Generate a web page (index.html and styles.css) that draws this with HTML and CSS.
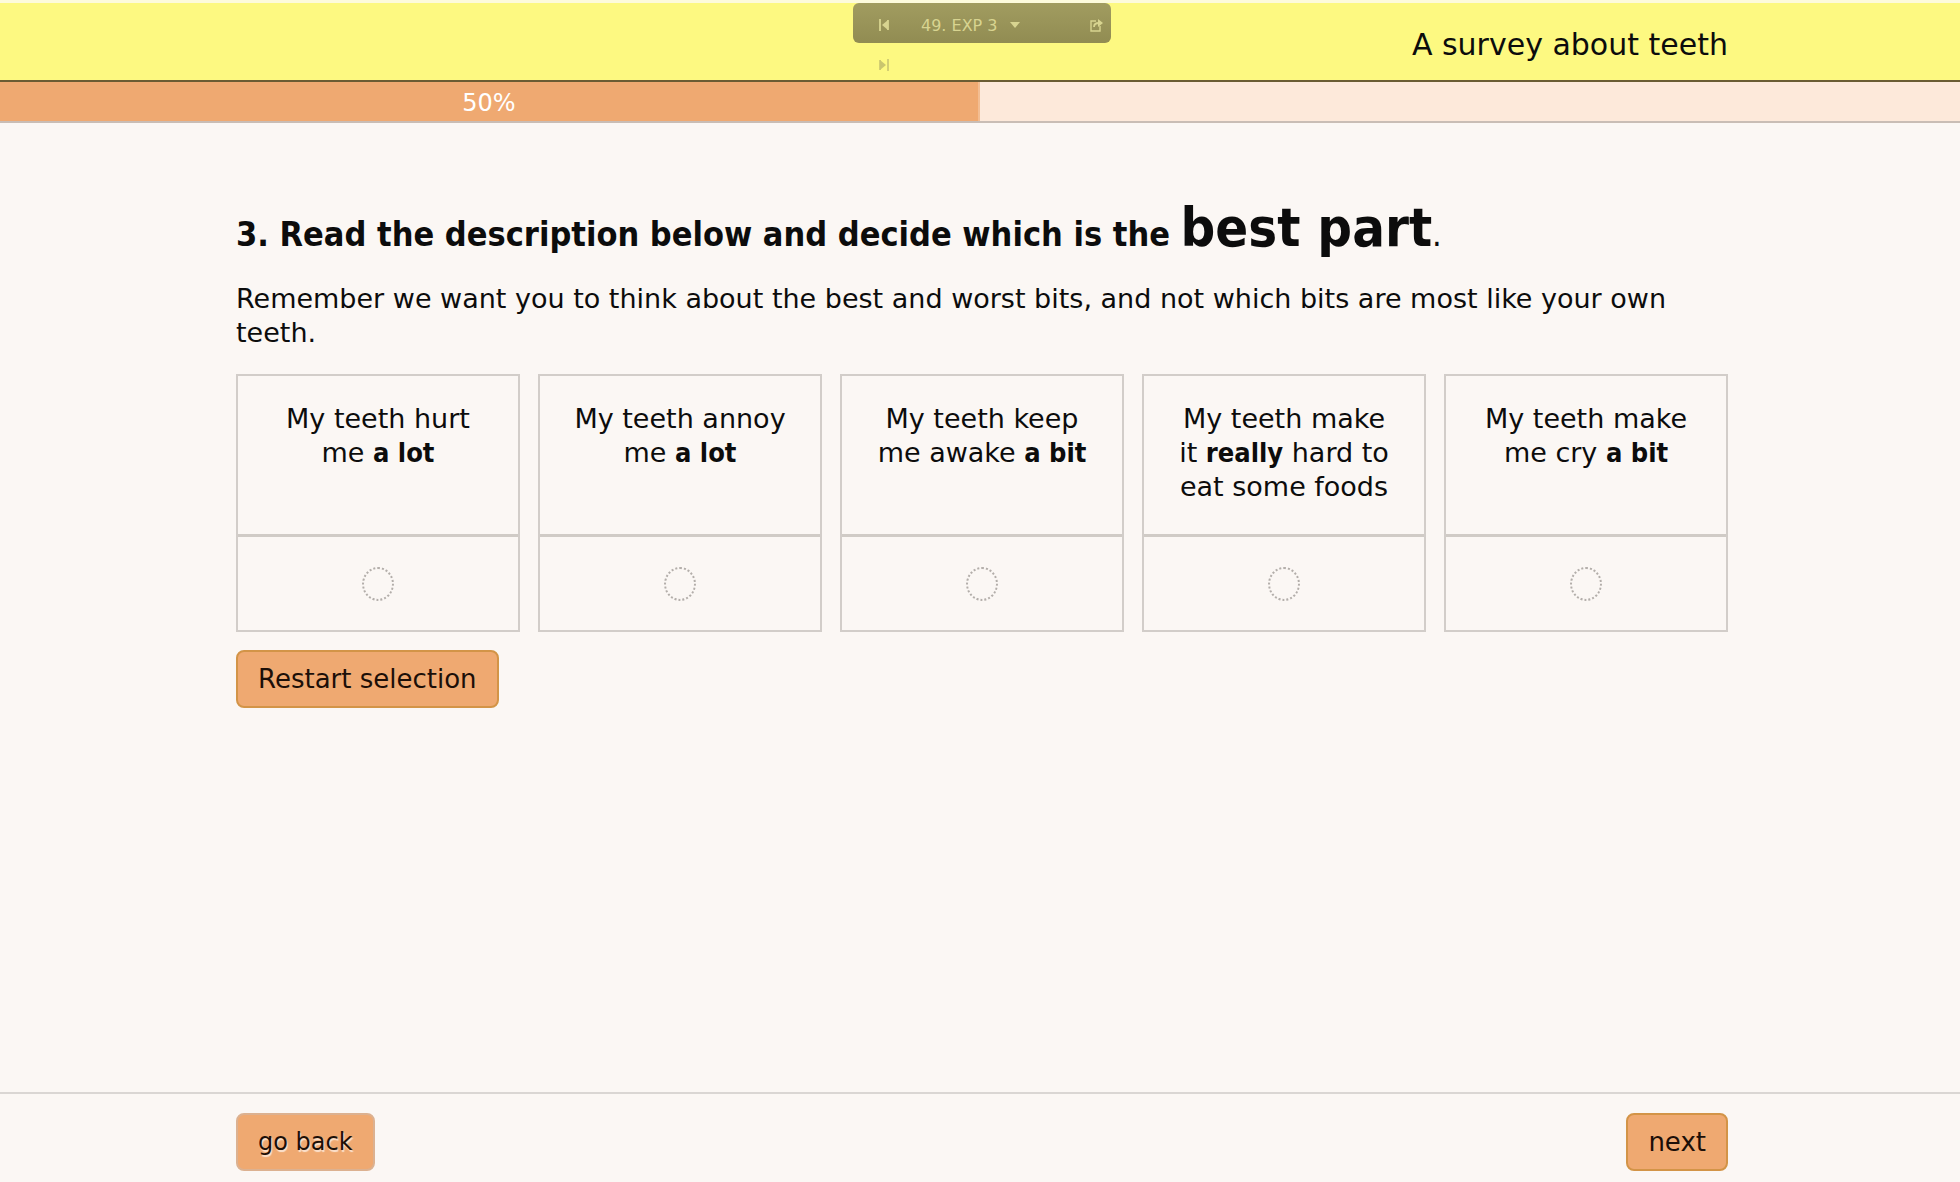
FILE: index.html
```html
<!DOCTYPE html>
<html lang="en">
<head>
<meta charset="utf-8">
<meta name="viewport" content="width=device-width, initial-scale=1">
<title>A survey about teeth</title>
<link rel="stylesheet" href="styles.css">
</head>
<body>
<header class="banner">
  <h1 class="banner-title">A survey about teeth</h1>
  <nav class="pager" aria-label="Survey pages">
    <div class="pager-bar">
      <button class="icon-button" type="button" aria-label="Previous page">
        <svg width="10" height="12" viewBox="0 0 10 12"><path d="M1 0v12M9 1v10" stroke="currentColor" stroke-width="1.8"/><path d="M9 1v10L3 6z" fill="currentColor"/></svg>
      </button>
      <button class="pager-page" type="button">49. EXP 3
        <svg width="10" height="6" viewBox="0 0 10 6"><path d="M0 0h10L5 6z" fill="currentColor"/></svg>
      </button>
      <button class="icon-button" type="button" aria-label="Open page">
        <svg width="13" height="13" viewBox="0 0 13 13" fill="none" stroke="currentColor"><path d="M6 2H1v10h9V7" stroke-width="1.4"/><path d="M4 8c0-3 2-4 5-4" stroke-width="1.8"/><path d="M8 0l5 4-5 4z" fill="currentColor" stroke="none"/></svg>
      </button>
    </div>
    <button class="icon-button pager-next" type="button" aria-label="Next page">
      <svg width="10" height="12" viewBox="0 0 10 12"><path d="M1 1v10M9 0v12" stroke="currentColor" stroke-width="1.6"/><path d="M1 1l6 5-6 5z" fill="currentColor"/></svg>
    </button>
  </nav>
</header>
<div class="progress" role="progressbar" aria-label="Progress" aria-valuenow="50" aria-valuemin="0" aria-valuemax="100">
  <div class="progress-fill" style="width: 50%">50%</div>
</div>
<main class="question">
  <h2 class="question-title">3. Read the description below and decide which is the <strong class="key">best part</strong><span class="stop">.</span></h2>
  <p class="hint">Remember we want you to think about the best and worst bits, and not which bits are most like your own teeth.</p>
  <div class="options" role="radiogroup" aria-label="Best part">
    <div class="option">
      <label class="option-text" for="hurt">My teeth hurt<br>me <b>a lot</b></label>
      <div class="option-pick"><input class="pick" type="radio" name="best" id="hurt"></div>
    </div>
    <div class="option">
      <label class="option-text" for="annoy">My teeth annoy<br>me <b>a lot</b></label>
      <div class="option-pick"><input class="pick" type="radio" name="best" id="annoy"></div>
    </div>
    <div class="option">
      <label class="option-text" for="awake">My teeth keep<br>me awake <b>a bit</b></label>
      <div class="option-pick"><input class="pick" type="radio" name="best" id="awake"></div>
    </div>
    <div class="option">
      <label class="option-text" for="eat">My teeth make<br>it <b>really</b> hard to<br>eat some foods</label>
      <div class="option-pick"><input class="pick" type="radio" name="best" id="eat"></div>
    </div>
    <div class="option">
      <label class="option-text" for="cry">My teeth make<br>me cry <b>a bit</b></label>
      <div class="option-pick"><input class="pick" type="radio" name="best" id="cry"></div>
    </div>
  </div>
  <button class="button" type="button">Restart selection</button>
</main>
<footer class="footer">
  <button class="button button-back" type="button">go back</button>
  <button class="button" type="button">next</button>
</footer>
</body>
</html>
```
FILE: styles.css
```css
* {
  box-sizing: border-box;
}

body {
  display: flex;
  flex-direction: column;
  min-height: 100vh;
  margin: 0;
  background: #fbf7f4;
  color: #0c0c0c;
  font: 27px/34px "DejaVu Sans", sans-serif;
}

h1,
h2,
p {
  margin: 0;
}

button {
  font-family: inherit;
  cursor: pointer;
}

b {
  font-family: "DejaVu Sans Condensed", "DejaVu Sans", sans-serif;
}

/* Top banner */
.banner {
  position: relative;
  display: flex;
  justify-content: flex-end;
  padding: 25px 232px 18px;
  background: #fdf981;
  border-top: 3px solid #fdfbdc;
  border-bottom: 2px solid #6b5c33;
}

.banner-title {
  font-size: 30px;
  font-weight: 400;
  line-height: 34px;
}

.pager {
  position: absolute;
  top: 0;
  left: 50%;
  width: 258px;
  margin-left: -127px;
}

.pager-bar {
  display: flex;
  align-items: center;
  height: 40px;
  padding: 4px 8px 0 26px;
  border-radius: 6px;
  background: linear-gradient(#a19c60, #918c52);
  color: #d8d490;
}

.icon-button,
.pager-page {
  display: flex;
  align-items: center;
  padding: 0;
  border: 0;
  background: none;
  color: inherit;
}

.pager-page {
  gap: 12px;
  margin: 0 auto 0 32px;
  font-size: 16px;
}

.pager-next {
  margin: 16px 0 0 26px;
  color: #c9c56f;
}

/* Progress bar */
.progress {
  display: flex;
  height: 41px;
  background: #fde9da;
  border-bottom: 2px solid #c9bdb5;
}

.progress-fill {
  border-right: 2px solid #f3bd92;
  background: #efa971;
  color: #fff;
  font-size: 24px;
  line-height: 42px;
  text-align: center;
}

/* Question */
.question {
  flex: 1;
  padding: 72px 232px 40px 236px;
}

.question-title {
  font: 700 34px/66px "DejaVu Sans Condensed", "DejaVu Sans", sans-serif;
}

.key {
  font-size: 54px;
}

.stop {
  font-weight: 400;
}

.hint {
  padding: 15px 0 24px;
}

.options {
  display: grid;
  grid-template-columns: repeat(5, 1fr);
  gap: 18px;
  margin-bottom: 18px;
}

.option {
  display: flex;
  flex-direction: column;
  border: 2px solid #d2cdc9;
}

.option-text {
  flex: 1;
  min-height: 158px;
  padding: 26px 8px;
  text-align: center;
}

.option-pick {
  display: flex;
  align-items: center;
  justify-content: center;
  height: 96px;
  border-top: 3px solid #d0cbc6;
}

.pick {
  appearance: none;
  width: 32px;
  height: 34px;
  margin: 0;
  border: 2px dotted #b3aeaa;
  border-radius: 50%;
}

.pick:checked {
  background: #efa971;
}

/* Buttons */
.button {
  height: 58px;
  padding: 0 20px;
  border: 2px solid #d39447;
  border-radius: 8px;
  background: #efa971;
  color: #1c0f08;
  font-size: 26px;
}

.button-back {
  border-color: #dcb190;
  font-size: 24px;
  text-shadow: 1px 2px 1px #fbe3d0;
}

.footer {
  display: flex;
  justify-content: space-between;
  padding: 19px 232px 11px 236px;
  border-top: 2px solid #dad6d3;
}
```
